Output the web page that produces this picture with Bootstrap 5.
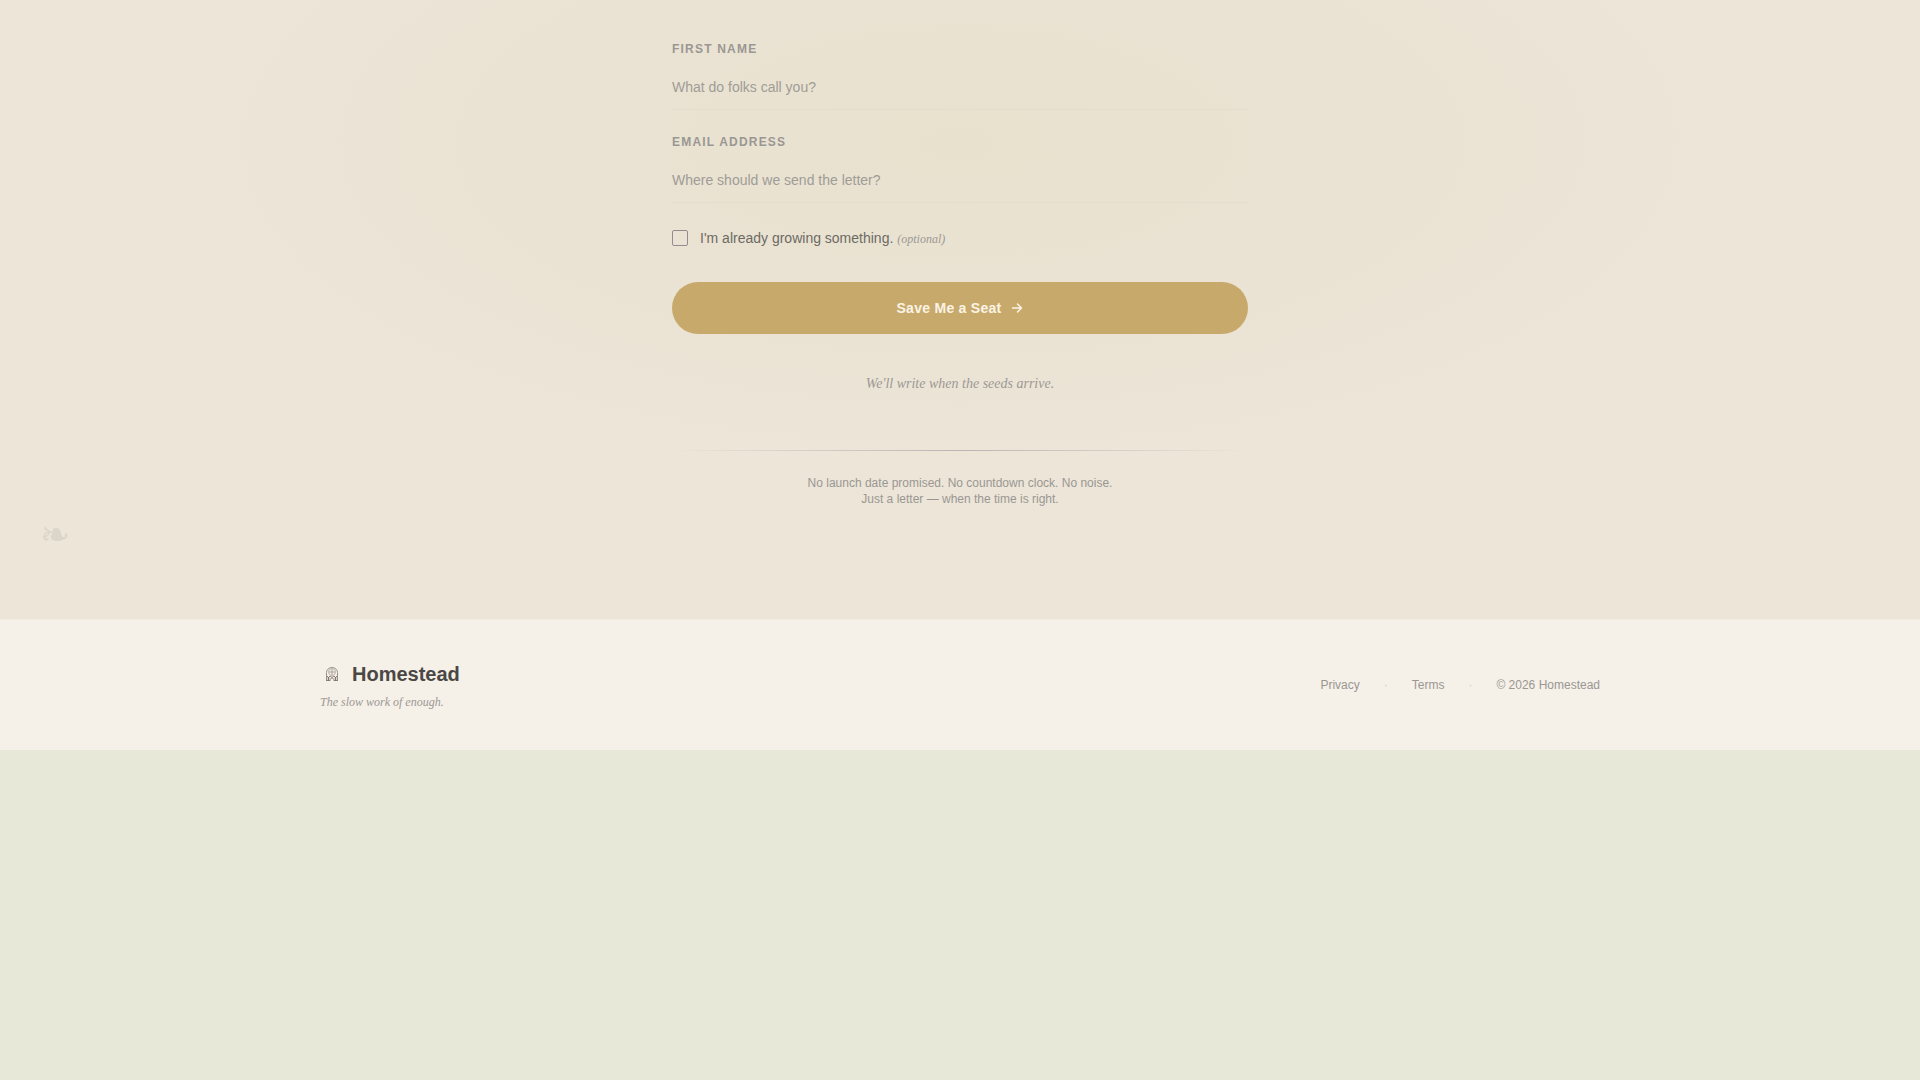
<!DOCTYPE html>
<html lang="en">
<head>
<meta charset="utf-8">
<meta name="viewport" content="width=device-width, initial-scale=1">
<title>Homestead</title>
<link href="https://cdn.jsdelivr.net/npm/bootstrap@5.3.0/dist/css/bootstrap.min.css" rel="stylesheet">
<style>
  body { background: #e7e8d8; color: #9a9793; font-family: "Liberation Sans", Arial, sans-serif; font-size: 14px; line-height: 20px; }
  .signup { background: radial-gradient(ellipse 39% 51% at 50% 23%, #e8e1ce, #ece5d8) #ece5d8; padding: 39px 16px 112px; }
  .signup-form { max-width: 576px; }
  .field { margin-bottom: 22px; }
  .field-label { font-size: 12px; line-height: 20px; font-weight: 700; letter-spacing: 0.1em; color: #9a9793; }
  .line-input { height: 43px; padding: 6px 0 8px; border: 0; border-bottom: 1px solid #e4ddce; border-radius: 0; background: transparent; font-size: 14px; line-height: 20px; color: #5b5a52; }
  .line-input:focus { background: transparent; box-shadow: none; border-color: #c8a96a; }
  .line-input::placeholder { color: #9f9c97; opacity: 1; }
  .tick-row { padding: 3px 0 10px; }
  .tick { width: 16px; height: 16px; appearance: none; border: 1px solid #948c90; border-radius: 2px; background: transparent; }
  .tick:checked { background: #c8a96a; }
  .tick-text { color: #6d6a64; }
  .aside-text { font-family: "Liberation Serif", "Times New Roman", serif; font-style: italic; color: #9c9893; }
  .closing { margin: 40px 0 56px; }
  .tiny { font-size: 12px; line-height: 16px; }
  .seat-btn, .seat-btn:hover { height: 52px; background: #c8a96c; color: #fbf4e4; font-size: 14px; font-weight: 700; letter-spacing: 0.02em; }
  .fade-line { height: 1px; background: linear-gradient(90deg, transparent, #bbb4b3, transparent); }
  .leaf { left: 40px; bottom: 60px; font-family: "DejaVu Sans", sans-serif; font-size: 36px; line-height: 48px; color: #dcd6ca; }
  .site-footer { background: #f5f0e8; border-top: 1px solid #f0eadf; padding: 40px 16px; }
  .footer-inner { max-width: 1280px; }
  .brand-name { font-size: 20px; line-height: 28px; font-weight: 700; color: #4a4845; }
  .tagline { margin-top: 6px; }
  .dot { color: #d3cdc4; }
</style>
<script src="https://cdn.jsdelivr.net/npm/bootstrap@5.3.0/dist/js/bootstrap.bundle.min.js"></script>
</head>
<body>
<main class="signup position-relative">
  <form class="signup-form mx-auto">
    <div class="field">
      <label class="field-label d-block mb-2" for="first-name">FIRST NAME</label>
      <input class="line-input form-control" id="first-name" type="text" placeholder="What do folks call you?">
    </div>
    <div class="field">
      <label class="field-label d-block mb-2" for="email">EMAIL ADDRESS</label>
      <input class="line-input form-control" id="email" type="email" placeholder="Where should we send the letter?">
    </div>
    <div class="tick-row d-flex align-items-center">
      <input class="tick flex-shrink-0 me-2" id="growing" type="checkbox">
      <label class="tick-text ms-1" for="growing">I'm already growing something. <span class="aside-text tiny">(optional)</span></label>
    </div>
    <button class="seat-btn btn border-0 rounded-pill w-100 d-flex align-items-center justify-content-center gap-2 mt-4" type="button">
      Save Me a Seat
      <svg width="14" height="14" viewBox="0 0 14 14" fill="none" stroke="currentColor" stroke-width="1.5" stroke-linecap="round" stroke-linejoin="round" aria-hidden="true"><path d="M2.500 7h9M7.500 3l4 4-4 4"/></svg>
    </button>
  </form>
  <div class="signup-form mx-auto text-center">
    <p class="aside-text closing">We'll write when the seeds arrive.</p>
    <div class="fade-line mb-4"></div>
    <p class="tiny mb-0">No launch date promised. No countdown clock. No noise.<br>Just a letter — when the time is right.</p>
  </div>
  <span class="leaf position-absolute" aria-hidden="true">❧</span>
</main>
<footer class="site-footer">
  <div class="footer-inner mx-auto d-flex align-items-center justify-content-between">
    <div>
      <div class="d-flex align-items-center gap-2">
        <svg width="24" height="24" viewBox="0 0 24 24" fill="none" stroke="#9a918b" stroke-width="1" aria-hidden="true">
          <path d="M6.500 18.500V10.500a5.500 5 0 0 1 11 0v8"/>
          <circle cx="12" cy="10" r="3.500" stroke="#bdb5ad"/>
          <path d="M12 7v6M9 10h6" stroke="#aaa29b"/>
          <path d="M7 14l1.500 1.500L10 14l2 1.500L14 14l1.500 1.500L17 14M6 18.500h4M14 18.500h4" stroke="#8a817b"/>
          <path d="M8.500 15v4M15.500 15v4" stroke="#7f7670" stroke-width="1.500"/>
          <path d="M10.500 18.500v-1a1.500 1.500 0 0 1 3 0v1"/>
        </svg>
        <span class="brand-name">Homestead</span>
      </div>
      <div class="aside-text tiny tagline">The slow work of enough.</div>
    </div>
    <nav class="tiny d-flex align-items-center gap-4" aria-label="Footer">
      <a class="text-reset text-decoration-none" href="#privacy">Privacy</a><span class="dot">·</span><a class="text-reset text-decoration-none" href="#terms">Terms</a><span class="dot">·</span><span>© 2026 Homestead</span>
    </nav>
  </div>
</footer>
</body>
</html>
